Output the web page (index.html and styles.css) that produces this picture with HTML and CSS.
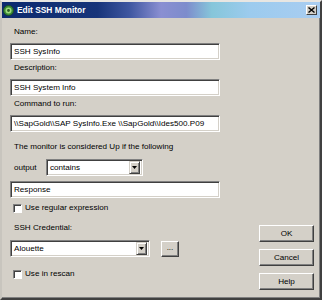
FILE: index.html
```html
<!DOCTYPE html>
<html lang="en">
<head>
    <meta charset="UTF-8">
    <title>Edit SSH Monitor</title>
    <link rel="stylesheet" href="styles.css">
</head>
<body>
    <div class="window">
        <div class="titlebar">
            <svg class="app-icon" width="11" height="11" viewBox="0 0 11 11">
                <circle cx="5.5" cy="5.5" r="5" fill="#3d8f3a" stroke="#1f4d1d" stroke-width="0.8"/>
                <circle cx="5.5" cy="5.5" r="3" fill="#9fdc7a"/>
                <circle cx="5.5" cy="5.5" r="1.4" fill="#2c5e28"/>
            </svg>
            <span class="title">Edit SSH Monitor</span>
            <span class="close">
                <svg width="7" height="6" viewBox="0 0 7 6">
                    <path d="M0.5 0.5 L6.5 5.5 M6.5 0.5 L0.5 5.5" stroke="#000" stroke-width="1.4"/>
                </svg>
            </span>
        </div>

        <div class="content">
            <div class="form">
                <div class="label">Name:</div>
                <div class="field wide">SSH SysInfo</div>

                <div class="label">Description:</div>
                <div class="field wide">SSH System Info</div>

                <div class="label">Command to run:</div>
                <div class="field wide">\\SapGold\\SAP SysInfo.Exe \\SapGold\\Ides500.P09</div>

                <div class="label note">The monitor is considered Up if the following</div>

                <div class="output-row">
                    <span class="label-inline">output</span>
                    <div class="field combo op">
                        <span class="combo-text">contains</span>
                        <span class="arrow"><svg width="5" height="3" viewBox="0 0 5 3"><path d="M0 0 H5 L2.5 3 Z" fill="#000"/></svg></span>
                    </div>
                </div>

                <div class="field wide response">Response</div>

                <div class="check-row regex">
                    <span class="checkbox"></span>
                    <span>Use regular expression</span>
                </div>

                <div class="label cred">SSH Credential:</div>
                <div class="cred-row">
                    <div class="field combo cred-combo">
                        <span class="combo-text">Alouette</span>
                        <span class="arrow"><svg width="5" height="3" viewBox="0 0 5 3"><path d="M0 0 H5 L2.5 3 Z" fill="#000"/></svg></span>
                    </div>
                    <div class="btn dots">...</div>
                </div>

                <div class="check-row rescan">
                    <span class="checkbox"></span>
                    <span>Use in rescan</span>
                </div>
            </div>

            <div class="buttons">
                <div class="btn action">OK</div>
                <div class="btn action">Cancel</div>
                <div class="btn action">Help</div>
            </div>
        </div>
    </div>
</body>
</html>
```

FILE: styles.css
```css
body {
    margin: 0;
    background: #d4d0c8;
    font-family: "Liberation Sans", Arial, sans-serif;
    font-size: 8.1px;
    color: #000;
}
.window {
    width: 322px;
    height: 300px;
    box-sizing: border-box;
    background: #d4d0c8;
    border-top: 2px solid #e8e6e2;
    border-left: 2px solid #c8c5be;
    border-right: 2px solid #404040;
    border-bottom: 2px solid #404040;
    box-shadow: inset -1px -1px #808080;
    display: flex;
    flex-direction: column;
}
.titlebar {
    height: 16px;
    display: flex;
    align-items: center;
    padding: 0 3px 0 1px;
    background: linear-gradient(90deg, #0c2a6e 0%, #17347a 30%, #3e56a0 40%, #8a8fd2 50%, #7d8ccc 58%, #86c6da 66%, #9ccbee 78%, #a9cdf1 100%);
}
.app-icon {
    margin-right: 3px;
}
.title {
    color: #fff;
    font-weight: bold;
    font-size: 8.4px;
    flex: 1;
}
.close {
    width: 11px;
    height: 10px;
    box-sizing: border-box;
    background: #d4d0c8;
    border-top: 1px solid #fff;
    border-left: 1px solid #fff;
    border-right: 1px solid #404040;
    border-bottom: 1px solid #404040;
    display: flex;
    align-items: center;
    justify-content: center;
}
.content {
    flex: 1;
    display: flex;
    justify-content: space-between;
}
.form {
    display: flex;
    flex-direction: column;
    align-items: flex-start;
    padding: 9px 0 0 8px;
}
.label {
    line-height: 10px;
    padding-left: 4px;
    margin-top: 3px;
}
.label:first-child {
    margin-top: 0;
}
.field {
    height: 17px;
    box-sizing: border-box;
    background: #fff;
    border-top: 1px solid #808080;
    border-left: 1px solid #808080;
    border-right: 1px solid #fff;
    border-bottom: 1px solid #fff;
    box-shadow: inset 1px 1px #404040, inset -1px -1px #d4d0c8;
    padding: 0 3px;
    line-height: 15px;
    white-space: nowrap;
    margin-top: 6px;
}
.wide {
    width: 210px;
}
.note {
    margin-top: 10px;
}
.output-row {
    display: flex;
    align-items: center;
    margin-top: 7px;
}
.label-inline {
    width: 32px;
    padding-left: 4px;
}
.output-row .field {
    margin-top: 0;
}
.combo {
    display: flex;
    align-items: center;
    padding: 2px 2px 2px 3px;
}
.combo-text {
    flex: 1;
}
.op {
    width: 97px;
}
.arrow {
    width: 11px;
    height: 13px;
    box-sizing: border-box;
    background: #d4d0c8;
    border-top: 1px solid #d4d0c8;
    border-left: 1px solid #d4d0c8;
    border-right: 1px solid #404040;
    border-bottom: 1px solid #404040;
    box-shadow: inset 1px 1px #fff, inset -1px -1px #808080;
    display: flex;
    align-items: center;
    justify-content: center;
}
.response {
    margin-top: 5px;
}
.check-row {
    display: flex;
    align-items: center;
    line-height: 10px;
    padding-left: 3px;
}
.checkbox {
    width: 9px;
    height: 9px;
    box-sizing: border-box;
    background: #fff;
    border-top: 1px solid #808080;
    border-left: 1px solid #808080;
    border-right: 1px solid #fff;
    border-bottom: 1px solid #fff;
    box-shadow: inset 1px 1px #404040;
    margin-right: 3px;
}
.regex {
    margin-top: 5px;
}
.cred {
    margin-top: 10px;
}
.cred-row {
    display: flex;
    align-items: center;
    margin-top: 7px;
}
.cred-row .field {
    margin-top: 0;
}
.cred-combo {
    width: 140px;
}
.btn {
    box-sizing: border-box;
    background: #d4d0c8;
    border-top: 1px solid #fff;
    border-left: 1px solid #fff;
    border-right: 1px solid #404040;
    border-bottom: 1px solid #404040;
    box-shadow: inset -1px -1px #808080;
    display: flex;
    align-items: center;
    justify-content: center;
}
.dots {
    width: 18px;
    height: 16px;
    margin-left: 11px;
    padding-bottom: 2px;
}
.rescan {
    margin-top: 12px;
}
.buttons {
    display: flex;
    flex-direction: column;
    justify-content: flex-end;
    gap: 7px;
    padding: 0 6px 8px 0;
}
.action {
    width: 55px;
    height: 17px;
}
```
